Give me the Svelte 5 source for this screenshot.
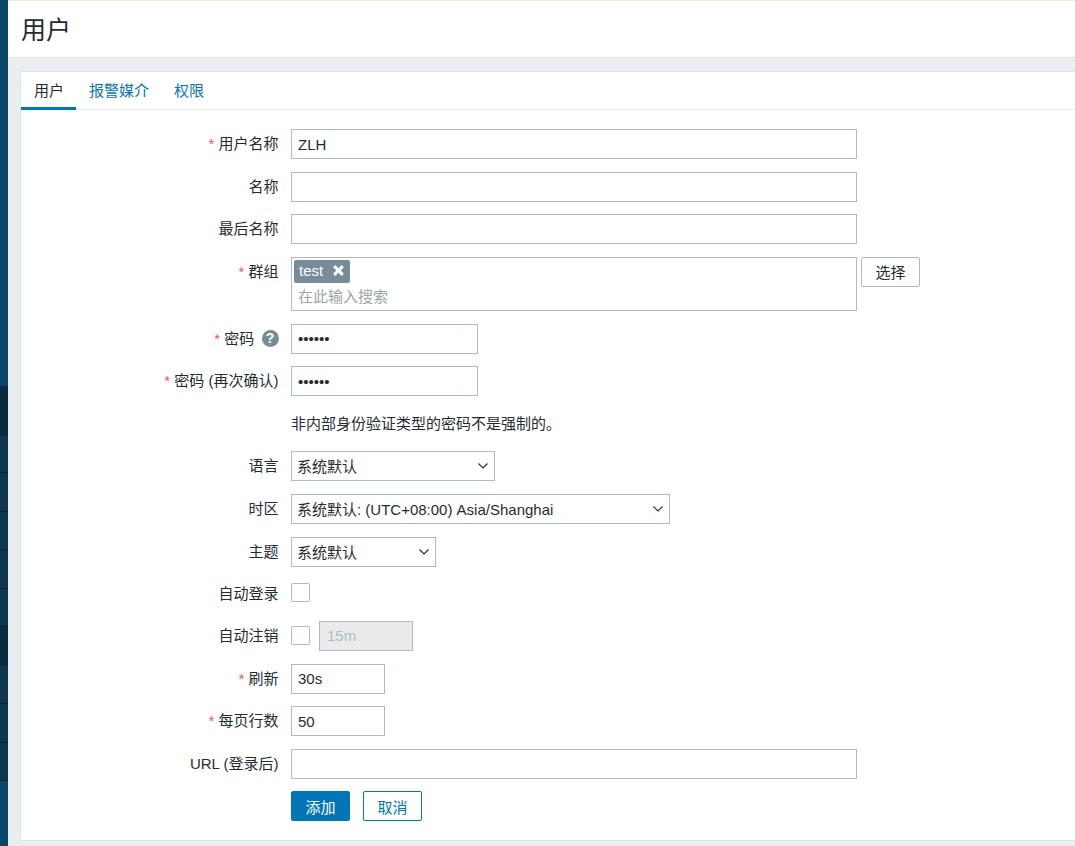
<script lang="ts">
  const sideBands = [
    { h: 386, c: 'top' },
    { h: 50, c: 'dark' },
    { h: 37, c: 'mid' },
    { h: 39, c: 'mid' },
    { h: 38, c: 'mid' },
    { h: 39, c: 'mid' },
    { h: 38, c: 'mid' },
    { h: 39, c: 'dark' },
    { h: 38, c: 'mid' },
    { h: 39, c: 'mid' },
    { h: 38, c: 'mid' },
    { h: 65, c: 'top' }
  ];
</script>

{#snippet chevron()}
  <svg class="chevron" viewBox="0 0 10 6" width="10" height="6">
    <path d="M0.5 0.5L5 5L9.5 0.5" stroke="#1f2c33" stroke-width="1.1" fill="none" />
  </svg>
{/snippet}

<div class="page">
  <aside class="sidebar">
    {#each sideBands as band}
      <div class={`band ${band.c}`} style={`height: ${band.h}px`}></div>
    {/each}
  </aside>

  <main class="main">
    <header class="header">
      <h1>用户</h1>
    </header>

    <div class="content">
      <section class="card">
        <nav class="tabs">
          <span class="tab active">用户</span>
          <span class="tab">报警媒介</span>
          <span class="tab">权限</span>
        </nav>

        <form class="form" onsubmit={(e) => e.preventDefault()}>
          <label class="lbl" for="alias"><i>*</i> 用户名称</label>
          <div><input id="alias" class="w-full" value="ZLH" /></div>

          <label class="lbl" for="name">名称</label>
          <div><input id="name" class="w-full" /></div>

          <label class="lbl" for="surname">最后名称</label>
          <div><input id="surname" class="w-full" /></div>

          <span class="lbl"><i>*</i> 群组</span>
          <div class="with-btn">
            <div class="multi">
              <span class="chip">test
                <svg viewBox="0 0 13 13" width="13" height="13">
                  <path d="M2.2 2.2l8.6 8.6M10.8 2.2l-8.6 8.6" stroke="#fff" stroke-width="3.1" fill="none" />
                </svg>
              </span>
              <span class="placeholder">在此输入搜索</span>
            </div>
            <button type="button" class="btn-alt">选择</button>
          </div>

          <label class="lbl" for="pw1"><i>*</i> 密码 <span class="help">?</span></label>
          <div><input id="pw1" class="w-pass" type="password" value="123456" /></div>

          <label class="lbl" for="pw2"><i>*</i> 密码 (再次确认)</label>
          <div><input id="pw2" class="w-pass" type="password" value="123456" /></div>

          <span class="lbl"></span>
          <div class="note">非内部身份验证类型的密码不是强制的。</div>

          <label class="lbl" for="lang">语言</label>
          <div class="sel w-lang">
            <select id="lang"><option>系统默认</option></select>
            {@render chevron()}
          </div>

          <label class="lbl" for="tz">时区</label>
          <div class="sel w-tz">
            <select id="tz"><option>系统默认: (UTC+08:00) Asia/Shanghai</option></select>
            {@render chevron()}
          </div>

          <label class="lbl" for="theme">主题</label>
          <div class="sel w-theme">
            <select id="theme"><option>系统默认</option></select>
            {@render chevron()}
          </div>

          <span class="lbl short">自动登录</span>
          <div class="check-row single"><span class="check"></span></div>

          <span class="lbl">自动注销</span>
          <div class="check-row">
            <span class="check"></span>
            <input class="w-off" value="15m" disabled />
          </div>

          <label class="lbl" for="refresh"><i>*</i> 刷新</label>
          <div><input id="refresh" class="w-num" value="30s" /></div>

          <label class="lbl" for="rows"><i>*</i> 每页行数</label>
          <div><input id="rows" class="w-num" value="50" /></div>

          <label class="lbl" for="url">URL (登录后)</label>
          <div><input id="url" class="w-full" /></div>

          <span></span>
          <div class="actions">
            <button type="submit" class="btn-main">添加</button>
            <button type="button" class="btn-outline">取消</button>
          </div>
        </form>
      </section>
    </div>
  </main>
</div>

<style>
  :global(body) {
    margin: 0;
    overflow: hidden;
    background: #ebeef0;
  }

  .page {
    display: flex;
    width: 1075px;
    height: 846px;
    overflow: hidden;
    font-family: "Liberation Sans", "Noto Sans CJK SC", sans-serif;
    font-size: 15px;
    color: #1f2c33;
  }

  .sidebar {
    width: 8px;
    flex: none;
    display: flex;
    flex-direction: column;
  }

  .band.top { background: #0a466a; }
  .band.dark { background: #0a2b3e; }
  .band.mid {
    background: #0d3650;
    border-bottom: 1px solid #08202f;
    box-sizing: border-box;
  }

  .main {
    flex: 1;
    min-width: 0;
    display: flex;
    flex-direction: column;
  }

  .header {
    height: 58px;
    box-sizing: border-box;
    background: #fff;
    border-top: 1px solid #f0e6d2;
    border-bottom: 1px solid #dfe4e7;
    padding: 3px 0 0 13px;
    display: flex;
    align-items: center;
  }

  h1 {
    margin: 0;
    font-size: 25px;
    font-weight: 400;
    line-height: 1;
  }

  .content {
    flex: 1;
    padding: 13px 0 5px 12px;
    min-height: 0;
  }

  .card {
    height: 100%;
    box-sizing: border-box;
    background: #fff;
    border: 1px solid #dfe4e7;
    border-right: 0;
  }

  .tabs {
    display: flex;
    height: 38px;
    box-sizing: border-box;
    border-bottom: 1px solid #ebeef0;
  }

  .tab {
    padding: 0 12px 0 13px;
    height: 38px;
    box-sizing: border-box;
    line-height: 38px;
    color: #0275b8;
  }

  .tab.active {
    color: #1f2c33;
    border-bottom: 3px solid #0275b8;
  }

  .form {
    display: grid;
    grid-template-columns: 257.5px 1fr;
    column-gap: 12.5px;
    row-gap: 12.5px;
    padding-top: 19px;
    align-items: start;
  }

  .lbl {
    text-align: right;
    line-height: 30px;
    white-space: nowrap;
  }

  .lbl.short {
    height: 29px;
    line-height: 29px;
  }

  .lbl i {
    color: #e45959;
    font-style: normal;
  }

  input, select {
    box-sizing: border-box;
    display: block;
    height: 30px;
    border: 1px solid #acbbc4;
    border-radius: 0;
    background: #fff;
    font: inherit;
    color: #1f2c33;
    padding: 0 6px;
    outline: none;
  }

  select {
    appearance: none;
    width: 100%;
    padding: 1px 5px 0;
  }

  .sel {
    position: relative;
  }

  .chevron {
    position: absolute;
    top: 12px;
    right: 7px;
    display: block;
  }

  .w-full { width: 566px; }
  .w-pass { width: 187px; }
  .w-lang { width: 204px; }
  .w-tz { width: 379px; height: 30.5px; }
  .w-theme { width: 145px; }
  .w-num { width: 94px; }

  .w-off {
    width: 94px;
    background: #ebebeb;
    color: #acbbc4;
    padding-left: 7px;
  }

  .with-btn {
    display: flex;
    gap: 4px;
    align-items: flex-start;
  }

  .multi {
    box-sizing: border-box;
    width: 566px;
    height: 54.5px;
    border: 1px solid #acbbc4;
    padding: 2px;
    display: flex;
    flex-direction: column;
    align-items: flex-start;
  }

  .chip {
    box-sizing: border-box;
    display: inline-flex;
    align-items: center;
    gap: 9px;
    height: 23px;
    padding: 0 5px 2px;
    border-radius: 2px;
    background: #768d99;
    color: #fff;
  }

  .placeholder {
    margin: 3px 0 0 4px;
    line-height: 22px;
    color: #9aa5ab;
  }

  .btn-alt {
    height: 30px;
    width: 59px;
    padding: 0;
    background: #fff;
    border: 1px solid #acbbc4;
    border-radius: 2px;
    font: inherit;
    color: #1f2c33;
  }

  .help {
    display: inline-block;
    width: 17px;
    height: 17px;
    margin-left: 3px;
    border-radius: 50%;
    background: #768d99;
    color: #fff;
    font-weight: 700;
    font-size: 14px;
    line-height: 17px;
    text-align: center;
    vertical-align: 1px;
  }

  .note {
    line-height: 30px;
  }

  .check-row {
    display: flex;
    align-items: center;
    gap: 9px;
    height: 30.5px;
  }

  .check-row.single {
    height: 29px;
    align-items: flex-start;
    padding-top: 3.5px;
    box-sizing: border-box;
  }

  .check {
    box-sizing: border-box;
    display: block;
    width: 19px;
    height: 19px;
    border: 1px solid #acbbc4;
    border-radius: 2px;
    background: #fff;
  }

  .actions {
    display: flex;
    gap: 13px;
  }

  .actions button {
    width: 59px;
    height: 30px;
    padding: 0;
    border-radius: 2px;
    font: inherit;
  }

  .btn-main {
    background: #0275b8;
    border: 1px solid #0275b8;
    color: #fff;
    font-weight: 700;
  }

  .btn-outline {
    background: #fff;
    border: 1px solid #0275b8;
    color: #0275b8;
  }
</style>
